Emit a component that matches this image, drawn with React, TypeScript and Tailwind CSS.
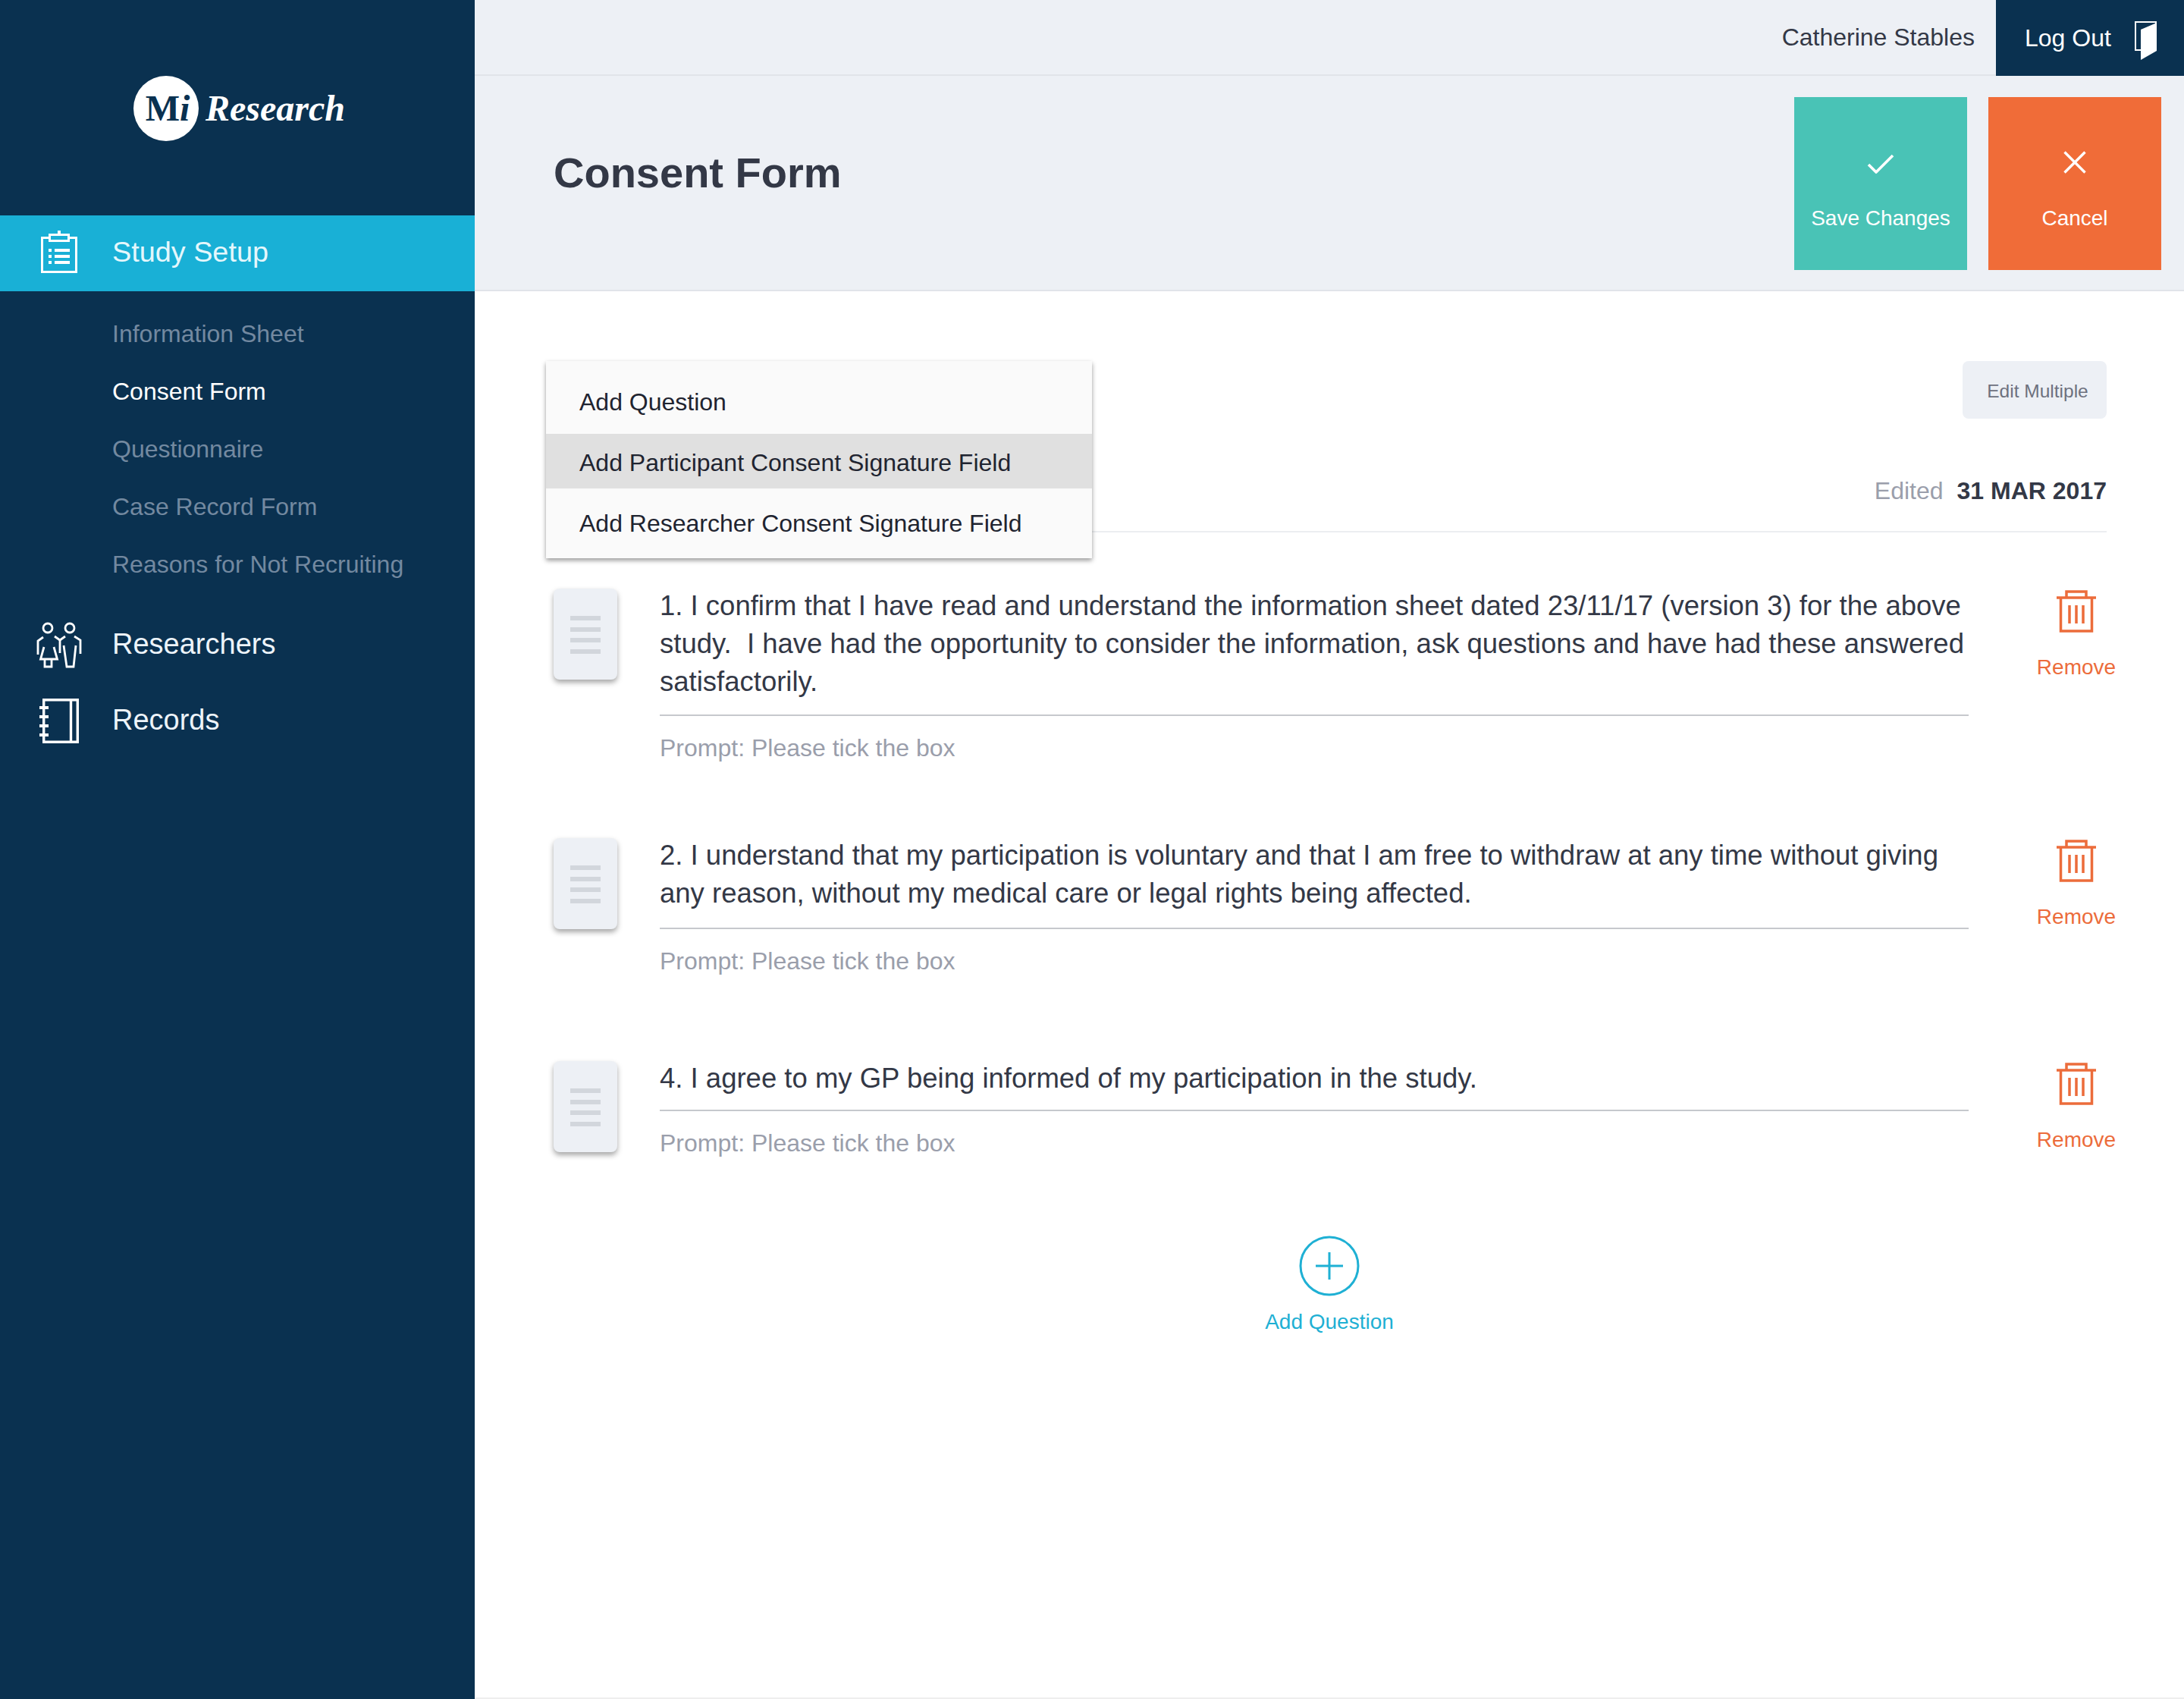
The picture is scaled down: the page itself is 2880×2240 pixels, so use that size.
import { Check, X } from "lucide-react";

const FONT = "font-['Liberation_Sans',Arial,sans-serif]";

const subItems = [
  { label: "Information Sheet", active: false },
  { label: "Consent Form", active: true },
  { label: "Questionnaire", active: false },
  { label: "Case Record Form", active: false },
  { label: "Reasons for Not Recruiting", active: false },
];

const questions = [
  {
    id: 1,
    space: "mt-0",
    pad: "pb-[18px]",
    lines: [
      "1. I confirm that I have read and understand the information sheet dated 23/11/17 (version 3) for the above",
      "study.\u00a0 I have had the opportunity to consider the information, ask questions and have had these answered",
      "satisfactorily.",
    ],
  },
  {
    id: 2,
    space: "mt-[90px]",
    pad: "pb-5",
    lines: [
      "2. I understand that my participation is voluntary and that I am free to withdraw at any time without giving",
      "any reason, without my medical care or legal rights being affected.",
    ],
  },
  {
    id: 4,
    space: "mt-[103px]",
    pad: "pb-4",
    lines: ["4. I agree to my GP being informed of my participation in the study."],
  },
];

function ClipboardIcon() {
  return (
    <svg width="48" height="56" viewBox="0 0 48 56" fill="none" stroke="white" strokeWidth="3" className="-mt-1 shrink-0">
      <path d="M10 9.5H1.5v45h45v-45H38" />
      <path d="M11.5 5.5h25v8h-25z" />
      <path d="M24 0v4" strokeWidth="4" />
      <path d="M10 26h4M18 26h20M10 34h4M18 34h20M10 42h4M18 42h20" strokeWidth="4" />
    </svg>
  );
}

function PeopleIcon() {
  return (
    <svg width="62" height="62" viewBox="0 0 62 62" fill="none" stroke="white" strokeWidth="2.8" className="mt-1 shrink-0">
      <circle cx="17" cy="8" r="6" />
      <circle cx="46" cy="8" r="6" />
      <path d="M11 20l-7 5v18" />
      <path d="M26 19l7 5 7-5" />
      <path d="M52 19l8 5v18" />
      <path d="M33 24v17" />
      <path d="M12 33L7.500 49h22L25 33" />
      <path d="M13 49v10h9V49" />
      <path d="M38 31l4 28h9l3-28" />
    </svg>
  );
}

function NotebookIcon() {
  return (
    <svg width="52" height="59" viewBox="0 0 52 59" fill="none" stroke="white" strokeWidth="3.4" className="mt-[3px] shrink-0">
      <path d="M5.700 1.700h44.600v55.600H5.700z" />
      <path d="M41.500 1.700v55.600" />
      <path d="M0 12h12M0 24h12M0 36h12M0 48h12" strokeWidth="4" />
    </svg>
  );
}

function DoorIcon() {
  return (
    <svg width="29" height="51" viewBox="0 0 29 51" className="mt-[7px] block">
      <path d="M1 1h27v37H1z" fill="none" stroke="white" strokeWidth="2" />
      <path d="M8 11l21-9v37L8 51z" fill="white" />
    </svg>
  );
}

function TrashIcon() {
  return (
    <svg width="52" height="56" viewBox="0 0 52 56" fill="none" stroke="#ec6c3b" strokeWidth="3.500">
      <path d="M0 10h52" />
      <path d="M13 10V2h26v8" />
      <path d="M5.500 10v44h41V10" />
      <path d="M17 20v24M26 20v24M35 20v24" />
    </svg>
  );
}

function DragHandle() {
  return (
    <div className="mt-1 flex h-[120px] w-[84px] shrink-0 flex-col items-center gap-[8.5px] rounded-lg bg-[#edf0f5] pt-9 shadow-[0_4px_7px_rgba(0,0,0,0.35)]">
      <span className="h-[6px] w-10 bg-[#d2d6dc]" />
      <span className="h-[6px] w-10 bg-[#d2d6dc]" />
      <span className="h-[6px] w-10 bg-[#d2d6dc]" />
      <span className="h-[6px] w-10 bg-[#d2d6dc]" />
    </div>
  );
}

function Sidebar() {
  return (
    <aside className="flex w-[626px] shrink-0 flex-col bg-[#0a3150]">
      <div className="flex h-[284px] items-start pl-[176px] pt-[100px]">
        <div className="flex h-[86px] w-[86px] items-center justify-center rounded-full bg-white pl-1 font-['Liberation_Serif',serif] text-[48px] font-bold leading-none text-[#0a3150]">
          M<span className="italic">i</span>
        </div>
        <span className="ml-[9px] mt-[19px] font-['Liberation_Serif',serif] text-[48px] font-bold italic leading-none text-white">
          Research
        </span>
      </div>
      <div className="flex h-[100px] items-center bg-[#19b0d6] pl-[54px]">
        <ClipboardIcon />
        <span className="ml-[46px] pb-1 text-[37.8px] text-[#e4f7fc]">Study Setup</span>
      </div>
      <nav className="flex flex-col pl-[148px] pt-[32px]">
        {subItems.map((item) => (
          <a
            key={item.label}
            className={`h-[76px] text-[32px] leading-[48px] ${item.active ? "text-white" : "text-[#7389a0]"}`}
          >
            {item.label}
          </a>
        ))}
      </nav>
      <div className="mt-[3px] flex h-[100px] items-center pl-[46px]">
        <PeopleIcon />
        <span className="ml-[40px] text-[38px] text-[#edf4fa]">Researchers</span>
      </div>
      <div className="flex h-[100px] items-center pl-[52px]">
        <NotebookIcon />
        <span className="ml-[44px] text-[38px] text-[#edf4fa]">Records</span>
      </div>
    </aside>
  );
}

function Header() {
  return (
    <>
      <div className="flex h-[100px] items-stretch justify-end border-b-2 border-[#e1e4e9] bg-[#edf0f5]">
        <span className="mr-[28px] self-center text-[32px] text-[#333846]">Catherine Stables</span>
        <div className="-mb-[2px] flex w-[248px] items-center bg-[#0a3150] pl-[38px]">
          <span className="text-[32px] text-white">Log Out</span>
          <span className="ml-[31px]">
            <DoorIcon />
          </span>
        </div>
      </div>
      <div className="flex h-[284px] items-start justify-between border-b-2 border-[#e1e4e9] bg-[#edf0f5] pl-[104px] pr-[30px] pt-7">
        <h1 className="mt-[72px] text-[56px] font-bold leading-none text-[#333846]">Consent Form</h1>
        <div className="flex gap-7">
          <button className="flex h-[228px] w-[228px] flex-col items-center bg-[#49c3b6] pt-[65px] text-white">
            <Check size={48} strokeWidth={1.8} strokeLinecap="butt" />
            <span className="mt-[27px] text-[28px] leading-10">Save Changes</span>
          </button>
          <button className="flex h-[228px] w-[228px] flex-col items-center bg-[#f06c38] pt-[59px] text-white">
            <X size={54} strokeWidth={1.5} strokeLinecap="butt" />
            <span className="mt-[27px] text-[28px] leading-10">Cancel</span>
          </button>
        </div>
      </div>
    </>
  );
}

function AddMenu() {
  return (
    <div className="absolute left-[94px] top-[92px] z-10 w-[720px] bg-[#fafafa] text-[32px] text-[#1f2430] shadow-[0_3px_6px_rgba(0,0,0,0.4)]">
      <div className="flex h-[96px] items-center pl-11 pt-[12px]">Add Question</div>
      <div className="flex h-[72px] items-center bg-[#e0e0e0] pl-11 pt-[4px]">Add Participant Consent Signature Field</div>
      <div className="flex h-[92px] items-start pl-11 pt-[22px]">Add Researcher Consent Signature Field</div>
    </div>
  );
}

function QuestionRow({ question }: { question: (typeof questions)[number] }) {
  return (
    <div className={`flex ${question.space}`}>
      <DragHandle />
      <div className="ml-14 w-[1726px] shrink-0">
        <div className={`border-b-2 border-[#c6c8cd] pt-[2px] ${question.pad} text-[36.5px] leading-[50px] text-[#333846]`}>
          {question.lines.map((line) => (
            <div key={line} className="whitespace-nowrap">
              {line}
            </div>
          ))}
        </div>
        <div className="mt-[17px] text-[32px] leading-[50px] text-[#9a9eab]">Prompt: Please tick the box</div>
      </div>
      <div className="flex flex-1 flex-col items-center pt-[6px]">
        <TrashIcon />
        <span className="mt-[26px] text-[28px] leading-10 text-[#ec6c3b]">Remove</span>
      </div>
    </div>
  );
}

export default function App() {
  return (
    <div className={`flex h-[2240px] w-[2880px] overflow-hidden bg-white ${FONT}`}>
      <Sidebar />
      <main className="flex min-w-0 flex-1 flex-col border-b-2 border-[#eeeeee]">
        <Header />
        <section className="relative flex-1">
          <AddMenu />
          <div className="pl-[104px] pr-[102px] pt-[92px]">
            <div className="flex justify-end">
              <button className="h-[76px] w-[190px] rounded-lg bg-[#edf0f5] pl-2 pt-[5px] text-[24.5px] text-[#6d717e]">
                Edit Multiple
              </button>
            </div>
            <div className="mt-[70px] flex h-[80px] items-start justify-end border-b-2 border-[#eceef1] text-[32px] leading-[50px]">
              <span className="text-[#9a9eab]">Edited</span>
              <span className="ml-[18px] font-bold text-[#333846]">31 MAR 2017</span>
            </div>
          </div>
          <div className="pl-[104px] pt-[70px]">
            {questions.map((q) => (
              <QuestionRow key={q.id} question={q} />
            ))}
          </div>
          <div className="mt-[97px] flex flex-col items-center">
            <svg width="80" height="80" viewBox="0 0 80 80" fill="none" stroke="#1fb0d4" strokeWidth="3">
              <circle cx="40" cy="40" r="38" />
              <path d="M22 40h36M40 22v36" />
            </svg>
            <span className="mt-[14px] text-[28px] leading-10 text-[#1fb0d4]">Add Question</span>
          </div>
        </section>
      </main>
    </div>
  );
}
